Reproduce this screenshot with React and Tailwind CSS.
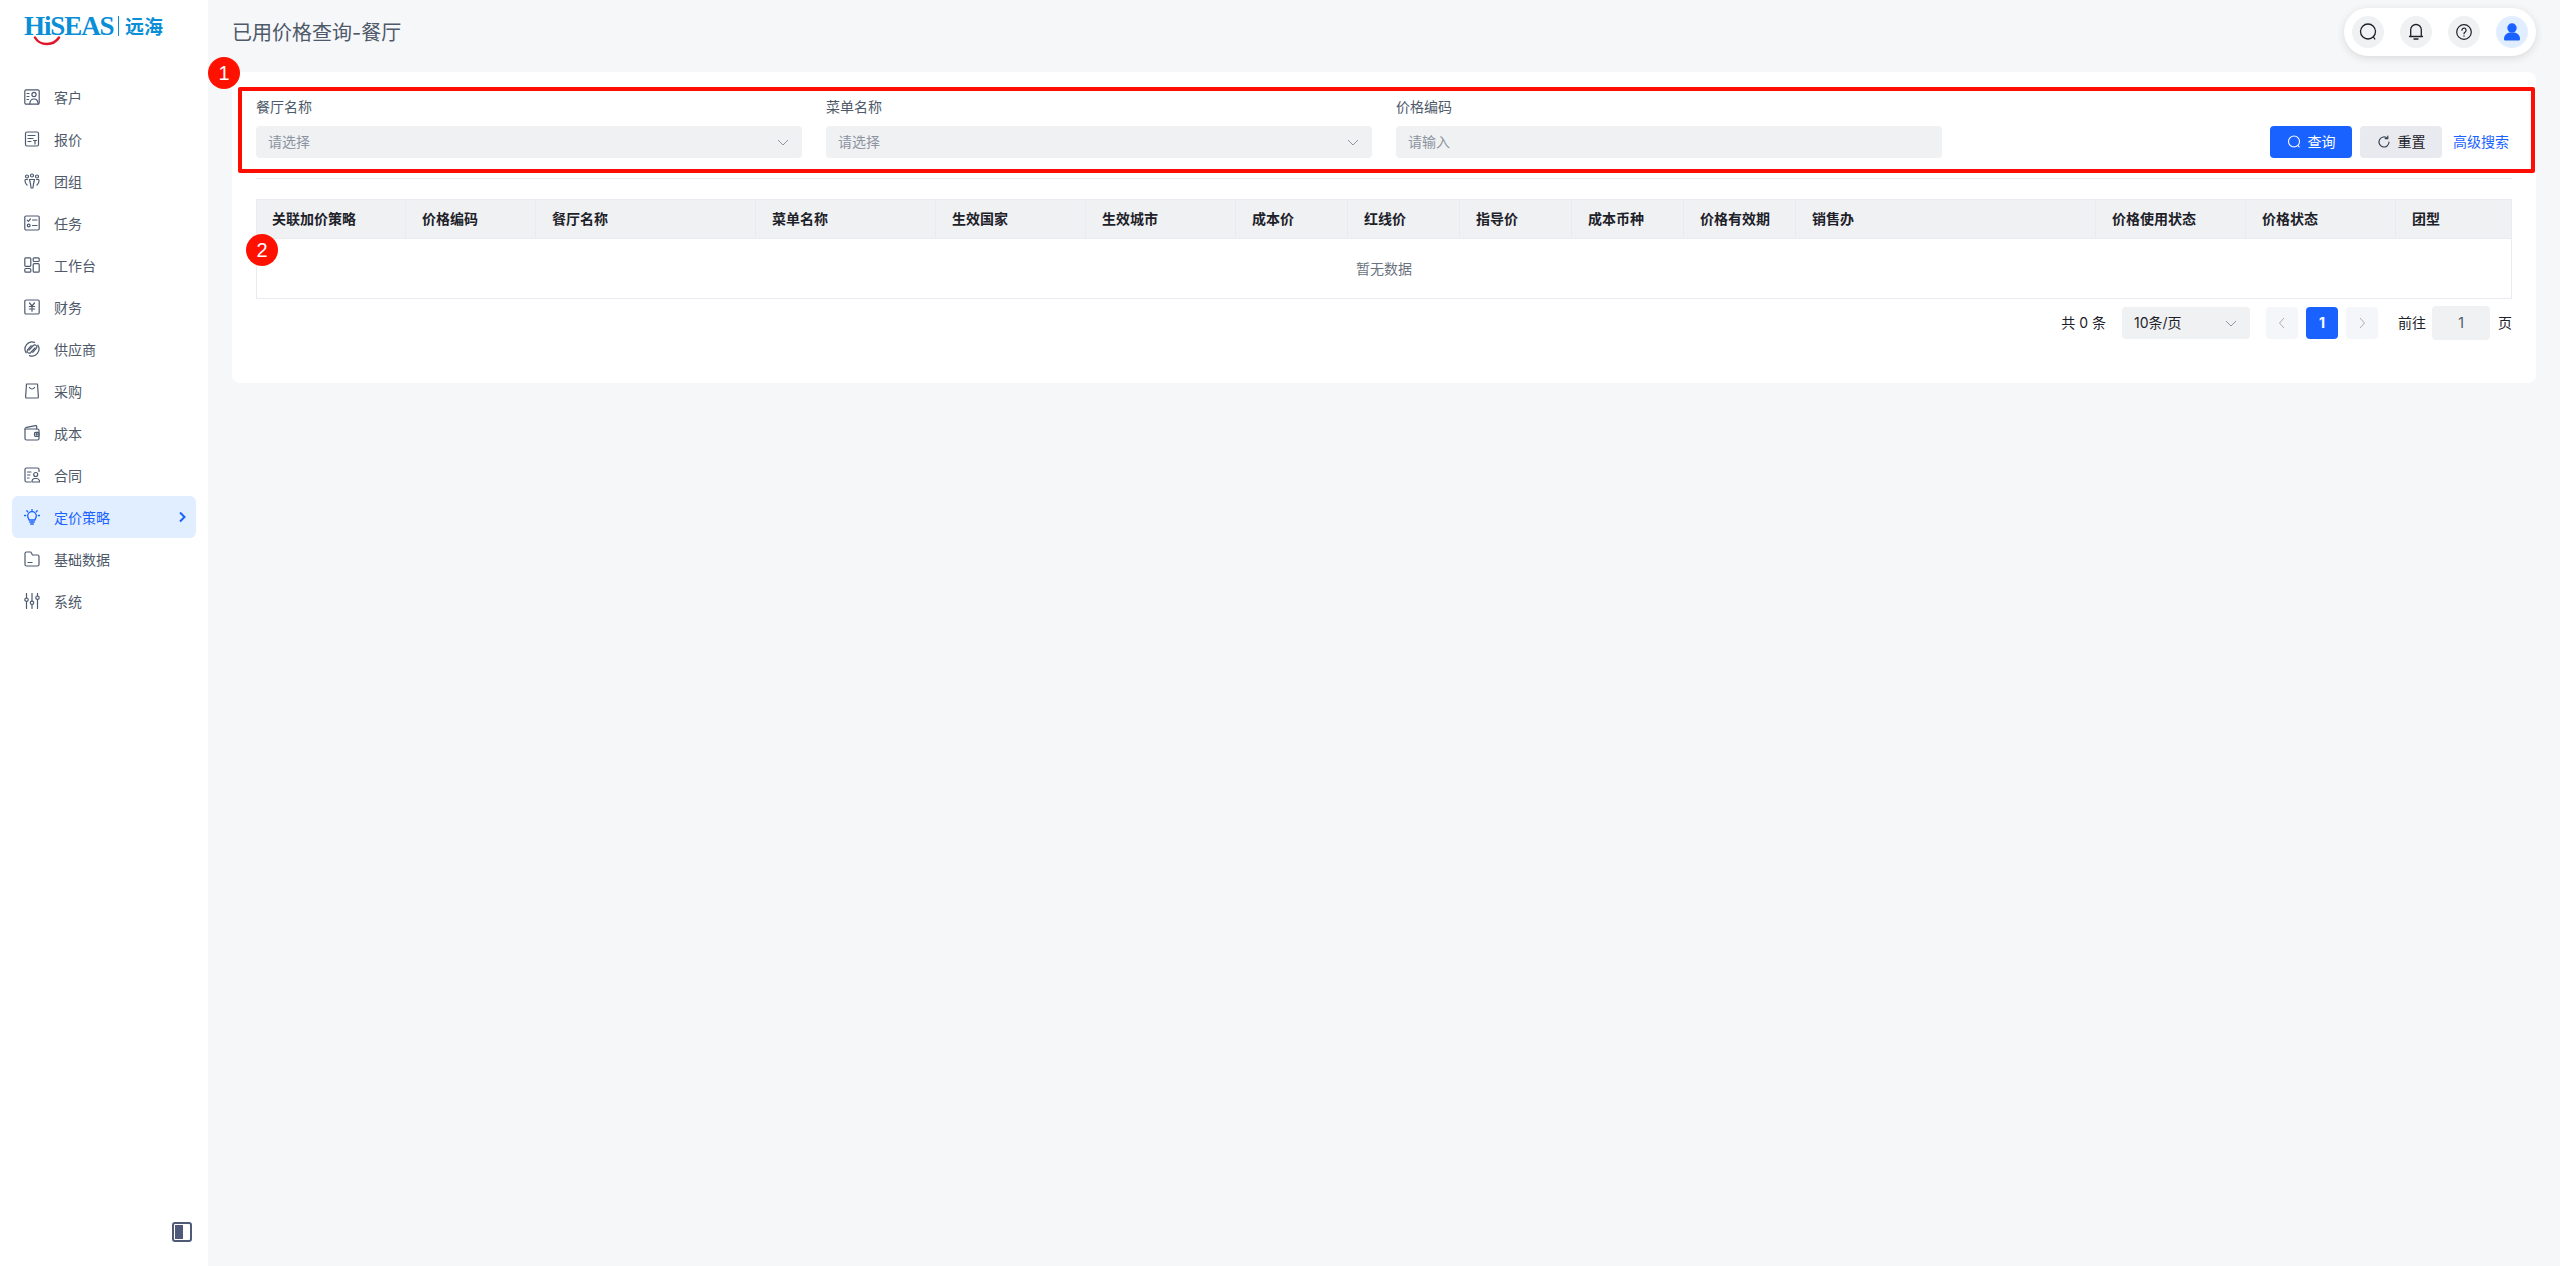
import React from "react";

const S = ({ children, className = "text-[#4e5a70]", size = 16, vb = "0 0 16 16" }) => (
  <svg width={size} height={size} viewBox={vb} fill="none" stroke="currentColor" strokeWidth="1.2" strokeLinecap="round" strokeLinejoin="round" className={`shrink-0 ${className}`}>
    {children}
  </svg>
);

const icons = {
  customer: (
    <>
      <path d="M2.200.8h11.600a1.400 1.400 0 0 1 1.400 1.400v11.600a1.400 1.400 0 0 1-1.400 1.400H2.200a1.400 1.400 0 0 1-1.400-1.400V2.200A1.400 1.400 0 0 1 2.200.8z" />
      <circle cx="10" cy="5.500" r="2.100" />
      <path d="M5.800 15c0-3 1.800-5 4.200-5s4.200 2 4.200 5M3 4.500h2M3 7.500h2M3 10.500h1.500" />
    </>
  ),
  quote: (
    <>
      <rect x="1.500" y="1" width="13" height="14" rx="1.500" />
      <path d="M4 4.500h7M4 7.500h5M4 10.500h3M9.500 9.500h3M11 9.500v3.500" />
    </>
  ),
  team: (
    <>
      <circle cx="3" cy="3.500" r="1.500" />
      <circle cx="8" cy="2.500" r="1.500" />
      <circle cx="13" cy="3.500" r="1.500" />
      <path d="M5.500 6.500h5l-1 4.500-.6 4h-1.800l-.6-4zM3.500 6.500H1.200c-.4 2 0 4 1.800 5.500M12.500 6.500h2.300c.4 2 0 4-1.800 5.500" />
    </>
  ),
  task: (
    <>
      <rect x=".8" y="1" width="14.400" height="14" rx="1.200" />
      <path d="M3.200 5.200l1.200 1.200 2-2.400M8.500 5h4.500M8.500 10.500h4.500" />
      <circle cx="4.700" cy="10.500" r="1.400" />
    </>
  ),
  work: (
    <>
      <rect x=".8" y=".8" width="6" height="8.500" rx="1" />
      <rect x=".8" y="11.500" width="6" height="3.700" rx="1" />
      <rect x="9.200" y=".8" width="6" height="3.700" rx="1" />
      <rect x="9.200" y="6.700" width="6" height="8.500" rx="1" />
    </>
  ),
  finance: (
    <>
      <rect x=".8" y="1" width="14.400" height="14" rx="1.200" />
      <path d="M5.500 4l2.500 3 2.500-3M5.300 7.500h5.400M5.300 10h5.400M8 7v5.200" />
    </>
  ),
  supplier: (
    <>
      <path d="M2.200 11.800A7 7 0 0 1 10.500 1.400M13.800 4.200a7 7 0 0 1-8.300 10.400" />
      <path d="M5 9.200l4.300-4.700a2.100 2.100 0 0 1 3.200 2.700L8.800 11.300M11 6.800l-4.300 4.700a2.100 2.100 0 0 1-3.200-2.700L7.200 4.700" />
    </>
  ),
  purchase: (
    <>
      <path d="M2.500 1h11l.9 13a1 1 0 0 1-1 1H2.600a1 1 0 0 1-1-1z" />
      <path d="M5.500 4.500c.6 1 1.500 1.500 2.500 1.500s1.900-.5 2.500-1.500" />
    </>
  ),
  cost: (
    <>
      <path d="M1 4.200V13.500A1.500 1.500 0 0 0 2.500 15h11a1.500 1.500 0 0 0 1.500-1.500v-8A1.500 1.500 0 0 0 13.500 4H2.300" />
      <path d="M1 4.200c0-1 .6-1.600 1.500-1.900l9-1.700a1 1 0 0 1 1.200 1V4" />
      <rect x="10.500" y="7.300" width="4.500" height="4" rx="1" />
      <circle cx="12.700" cy="9.300" r=".6" />
    </>
  ),
  contract: (
    <>
      <path d="M15 4.500V2.500A1.500 1.500 0 0 0 13.500 1h-11A1.500 1.500 0 0 0 1 2.500v11A1.500 1.500 0 0 0 2.500 15h4" />
      <path d="M3.500 5h3.500M3.500 8h2.500M3.500 11h1.500" />
      <circle cx="11.700" cy="7.500" r="2" />
      <path d="M8 15v-1a3 3 0 0 1 3-2.500h1.500a3 3 0 0 1 3 2.500v1z" />
    </>
  ),
  pricing: (
    <>
      <path d="M5 11c0-1.500-1.300-2-1.300-4a4.300 4.300 0 0 1 8.600 0c0 2-1.300 2.500-1.300 4z" strokeWidth="1.300" />
      <path d="M5.700 13h4.600M6.700 15h2.600M8 .3v1.200M2.800 1.800l.9 1M13.200 1.800l-.9 1M.5 6.500h1.200M14.300 6.500h1.200" strokeWidth="1.300" />
    </>
  ),
  base: (
    <>
      <path d="M1 13.500V2.500A1.500 1.500 0 0 1 2.500 1h4.300l1.700 3h5A1.500 1.500 0 0 1 15 5.500v8a1.500 1.500 0 0 1-1.500 1.500h-11A1.500 1.500 0 0 1 1 13.500z" />
      <path d="M4 11.500h4" />
    </>
  ),
  system: (
    <>
      <path d="M2.500.5v4.500M2.500 8.500v7M8 .5v7.500M8 11.500v4M13.500.5v2.500M13.500 6.500v9" />
      <circle cx="2.500" cy="6.700" r="1.700" />
      <circle cx="8" cy="9.800" r="1.700" />
      <circle cx="13.500" cy="4.700" r="1.700" />
    </>
  ),
};

const nav = [
  ["客户", "customer"],
  ["报价", "quote"],
  ["团组", "team"],
  ["任务", "task"],
  ["工作台", "work"],
  ["财务", "finance"],
  ["供应商", "supplier"],
  ["采购", "purchase"],
  ["成本", "cost"],
  ["合同", "contract"],
  ["定价策略", "pricing", true],
  ["基础数据", "base"],
  ["系统", "system"],
];

const columns = ["关联加价策略", "价格编码", "餐厅名称", "菜单名称", "生效国家", "生效城市", "成本价", "红线价", "指导价", "成本币种", "价格有效期", "销售办", "价格使用状态", "价格状态", "团型"];

const Chevron = ({ className = "text-[#8f95a1]" }) => (
  <svg width="14" height="14" viewBox="0 0 14 14" fill="none" stroke="currentColor" strokeWidth="1" className={className}>
    <path d="M2 5l5 5 5-5" />
  </svg>
);

const Field = ({ label, placeholder, select }) => (
  <div className="w-[546px] shrink-0">
    <div className="h-[22px] text-sm leading-[22px] text-[#4e5969]">{label}</div>
    <div className="mt-2 flex h-8 items-center justify-between rounded-sm bg-[#f0f1f3] pl-3 pr-3 text-sm text-[#8d94a1]">
      <span>{placeholder}</span>
      {select && <Chevron />}
    </div>
  </div>
);

const Circle = ({ children, active }) => (
  <div className={`flex h-8 w-8 items-center justify-center rounded-full ${active ? "bg-[#e1eeff]" : "bg-[#f0f1f3]"}`}>{children}</div>
);

export default function App() {
  return (
    <div className="relative flex min-h-screen bg-[#f6f7f9] font-['Inter','Noto_Sans_CJK_SC',sans-serif] text-[#1d2129]">
      <aside className="flex w-[208px] shrink-0 flex-col bg-white">
        <div className="h-[76px] pl-6 pt-[11px]">
          <div className="relative flex h-[30px] w-[150px] items-center whitespace-nowrap">
            <span className="w-[90px] font-['Liberation_Serif',serif] text-[27px] font-bold leading-[30px] tracking-[-1.1px] text-[#0a8ed6]">HiSEAS</span>
            <span className="ml-[4px] h-[20px] w-px bg-[#0a8ed6]"></span>
            <span className="ml-[6px] font-['Noto_Sans_CJK_SC',sans-serif] text-[19px] font-bold leading-[30px] text-[#0a8ed6]">远海</span>
            <svg width="28" height="10" viewBox="0 0 28 10" fill="none" className="absolute left-[9px] top-[25px]">
              <path d="M2 1.500c2.500 4.500 7 6.500 12 6.500S23 6 26 1.500" stroke="#e2162a" strokeWidth="2.500" strokeLinecap="round" />
            </svg>
          </div>
        </div>
        <nav className="flex flex-col">
          {nav.map(([label, icon, active]) => (
            <div key={label} className={`mx-3 flex h-[42px] items-center rounded-md pl-3 pr-[9px] text-sm ${active ? "bg-[#e1eeff] text-[#1a62ff]" : "text-[#4e5969]"}`}>
              <S className={active ? "text-[#1a62ff]" : "text-[#4e5a70]"}>{icons[icon]}</S>
              <span className="ml-[14px] flex-1 pt-[2px]">{label}</span>
              {active && (
                <svg width="10" height="12" viewBox="0 0 10 12" fill="none" stroke="currentColor" strokeWidth="2">
                  <path d="M3 1.500L7.500 6 3 10.500" />
                </svg>
              )}
            </div>
          ))}
        </nav>
        <div className="mt-auto mb-6 mr-4 flex h-5 w-5 items-center self-end rounded-[3px] border-2 border-[#4e5a78] p-[1px]">
          <div className="h-full w-[8px] bg-[#4e5a78]"></div>
        </div>
      </aside>

      <main className="min-w-0 flex-1 px-6">
        <header className="flex h-[72px] items-start justify-between pt-2">
          <h1 className="mt-[11px] text-xl font-normal leading-7 text-[#4e5969]">已用价格查询-餐厅</h1>
          <div className="flex h-12 items-center gap-4 rounded-3xl bg-white px-2 shadow-[0_2px_8px_rgba(0,0,0,0.12)]">
            <Circle>
              <svg width="18" height="18" viewBox="0 0 18 18" fill="none" stroke="#1d2129" strokeWidth="1.300" strokeLinecap="round">
                <circle cx="9" cy="8.500" r="7.500" />
                <path d="M14.500 14l1.300 2" />
              </svg>
            </Circle>
            <Circle>
              <svg width="18" height="18" viewBox="0 0 18 18" fill="none" stroke="#1d2129" strokeWidth="1.300" strokeLinejoin="round" strokeLinecap="round">
                <path d="M2.500 13.500h13M3.700 13.500V6.800a5.300 5.300 0 0 1 10.600 0v6.700" />
                <path d="M7 16h4" />
              </svg>
            </Circle>
            <Circle>
              <svg width="16" height="16" viewBox="0 0 16 16" fill="none" stroke="#1d2129" strokeWidth="1.200" strokeLinecap="round">
                <circle cx="8" cy="8" r="7.300" />
                <path d="M5.900 6.200a2.100 2.100 0 1 1 3.300 1.700c-.8.500-1.200 1-1.200 1.900" />
                <path d="M8 11.800v.4" />
              </svg>
            </Circle>
            <Circle active>
              <svg width="16" height="18" viewBox="0 0 16 18" fill="#1a62ff">
                <circle cx="8" cy="5" r="4.700" />
                <path d="M0 16c0-4 3-6 5.500-6.500h5C13 10 16 12 16 16c0 1-.6 1.500-1.500 1.500h-13C.6 17.500 0 17 0 16z" />
              </svg>
            </Circle>
          </div>
        </header>

        <section className="h-[311px] rounded-lg bg-white px-6 pt-6">
          <div className="flex items-end gap-6 border-b border-[#e9ebf0] pb-5">
            <Field label="餐厅名称" placeholder="请选择" select />
            <Field label="菜单名称" placeholder="请选择" select />
            <Field label="价格编码" placeholder="请输入" />
            <div className="ml-auto flex items-center">
              <button className="flex h-8 w-[82px] items-center justify-center gap-[7px] rounded-sm bg-[#1a62ff] text-sm text-white">
                <svg width="14" height="14" viewBox="0 0 14 14" fill="none" stroke="currentColor" strokeWidth="1.100" strokeLinecap="round">
                  <circle cx="7" cy="6.500" r="5.500" />
                  <path d="M11 10.500l1.200 1.500" />
                </svg>
                查询
              </button>
              <button className="ml-2 flex h-8 w-[82px] items-center justify-center gap-[7px] rounded-sm bg-[#e8eaef] text-sm text-[#1d2129]">
                <svg width="14" height="14" viewBox="0 0 14 14" fill="none" stroke="#3c4454" strokeWidth="1.200" strokeLinecap="round">
                  <path d="M12 7a5 5 0 1 1-1.600-3.700" />
                  <path d="M10.800 1v2.600H8.200" />
                </svg>
                重置
              </button>
              <span className="ml-[11px] mr-[3px] text-sm text-[#1a62ff]">高级搜索</span>
            </div>
          </div>

          <div className="mt-5 border border-[#e9ebf0]">
            <div className="grid h-[39px] grid-cols-[148px_130px_220px_180px_150px_150px_112px_112px_112px_112px_112px_300px_150px_150px_1fr] border-b border-[#e9ebf0] bg-[#f0f1f3]">
              {columns.map((c, i) => (
                <div key={c} className={`flex items-center text-sm font-semibold text-[#1d2129] ${i ? "border-l border-[#e9ebf0] pl-4" : "pl-[15px]"}`}>
                  {c}
                </div>
              ))}
            </div>
            <div className="flex h-[59px] items-center justify-center text-sm text-[#6b7280]">暂无数据</div>
          </div>

          <div className="mt-2 flex h-8 items-center justify-end text-sm text-[#1d2129]">
            <span>共 0 条</span>
            <div className="ml-4 flex h-8 w-[128px] items-center justify-between rounded-sm bg-[#f0f1f3] pl-3 pr-3 text-[#1d2129]">
              <span>10条/页</span>
              <Chevron />
            </div>
            <div className="ml-4 flex h-8 w-8 items-center justify-center rounded-sm bg-[#f5f6f9] text-[#a9aeb8]">
              <svg width="14" height="14" viewBox="0 0 14 14" fill="none" stroke="currentColor" strokeWidth="1"><path d="M9 2L4.500 7 9 12" /></svg>
            </div>
            <div className="ml-2 flex h-8 w-8 items-center justify-center rounded-sm bg-[#1a62ff] font-bold text-white">1</div>
            <div className="ml-2 flex h-8 w-8 items-center justify-center rounded-sm bg-[#f5f6f9] text-[#a9aeb8]">
              <svg width="14" height="14" viewBox="0 0 14 14" fill="none" stroke="currentColor" strokeWidth="1"><path d="M5 2l4.500 5L5 12" /></svg>
            </div>
            <span className="ml-5">前往</span>
            <div className="ml-[6px] flex h-[34px] w-[58px] items-center justify-center rounded-sm bg-[#f0f1f3] text-[#4e5969]">1</div>
            <span className="ml-2">页</span>
          </div>
        </section>
      </main>

      <div className="pointer-events-none absolute left-[238px] top-[87px] h-[86px] w-[2297px] rounded-[2px] border-4 border-[#ff0d00]"></div>
      <div className="absolute left-[208px] top-[57px] flex h-8 w-8 items-center justify-center rounded-full bg-[#ff1100] font-['Liberation_Sans',sans-serif] text-[20px] text-white">1</div>
      <div className="absolute left-[246px] top-[234px] flex h-8 w-8 items-center justify-center rounded-full bg-[#ff1100] font-['Liberation_Sans',sans-serif] text-[20px] text-white">2</div>
    </div>
  );
}
